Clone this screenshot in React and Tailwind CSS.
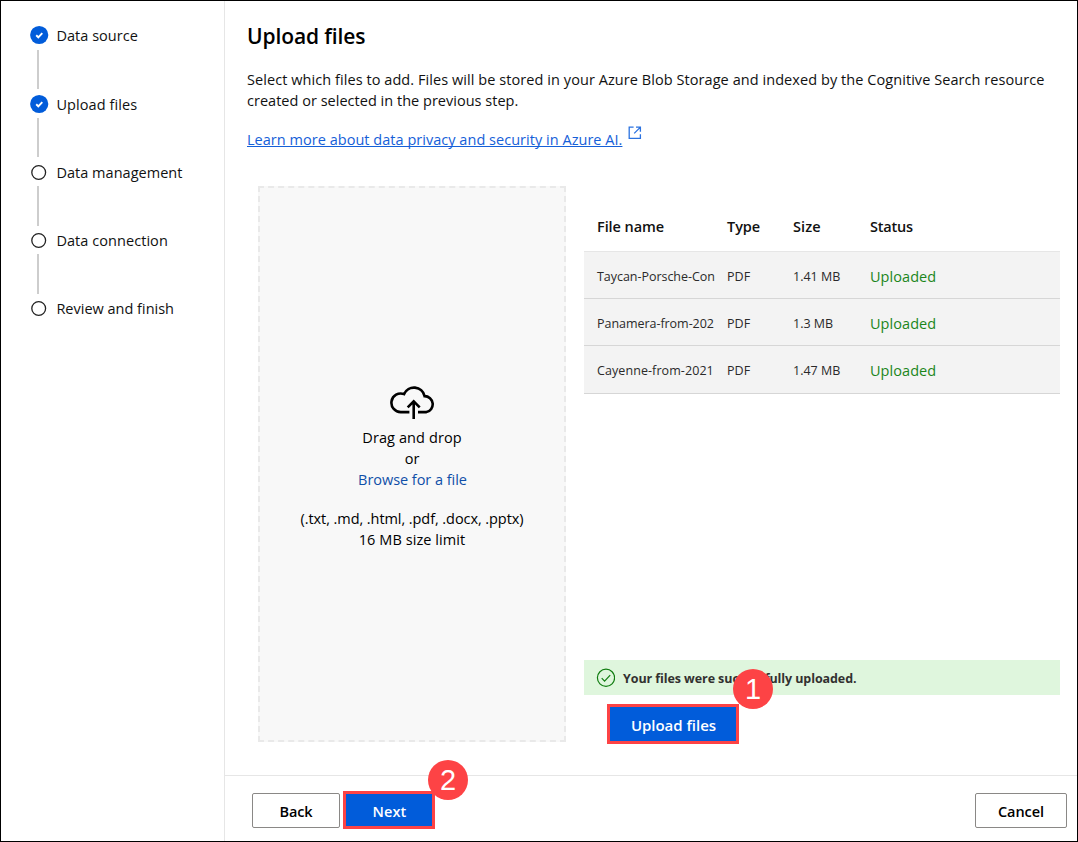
import React from "react";

const steps = [
  { label: "Data source", done: true, gap: "", line: "mt-[6px] h-[39px]", track: "tracking-[0.04px]" },
  { label: "Upload files", done: true, gap: "mt-[6px]", line: "mt-[5px] h-[39px]", track: "tracking-[0.08px]" },
  { label: "Data management", done: false, gap: "mt-[6px]", line: "mt-[5px] h-[40px]", track: "tracking-[0.03px]" },
  { label: "Data connection", done: false, gap: "mt-[5px]", line: "mt-[5px] h-[40px]", track: "tracking-[0.06px]" },
  { label: "Review and finish", done: false, gap: "mt-[5px]", line: null, track: "tracking-[0px]" },
];

const files = [
  { name: "Taycan-Porsche-Con", size: "1.41 MB", height: "h-[47px]", track: "tracking-[-0.04px]" },
  { name: "Panamera-from-202", size: "1.3 MB", height: "h-[47px]", track: "tracking-[-0.04px]" },
  { name: "Cayenne-from-2021", size: "1.47 MB", height: "h-[48px]", track: "tracking-[0.08px]" },
];

const columns = "grid grid-cols-[130px_66px_77px_1fr] items-center pl-[13px]";

function StepIcon({ done }) {
  return (
    <svg width="18" height="18" viewBox="0 0 18 18" fill="none" className="shrink-0 overflow-visible">
      {done ? (
        <>
          <circle cx="9.2" cy="9" r="9.1" fill="#015cda" />
          <path d="M6.2 9.3l2.1 2 4-4.2" stroke="#fff" strokeWidth="1.9" />
        </>
      ) : (
        <circle cx="8.7" cy="9.5" r="6.9" stroke="#222" strokeWidth="1.3" />
      )}
    </svg>
  );
}

function Sidebar() {
  return (
    <aside className="w-[224px] shrink-0 border-r border-[#e6e6e6] pl-[29px] pt-[25px]">
      <ol>
        {steps.map((s) => (
          <li key={s.label} className={s.gap}>
            <div className="flex h-[18px] items-center gap-[8.4px]">
              <StepIcon done={s.done} />
              <span className={`pt-[2px] text-[14.5px] leading-[18px] whitespace-nowrap ${s.track}`}>{s.label}</span>
            </div>
            {s.line && <div className={`ml-[7px] w-[2px] bg-[#cdcdcd] ${s.line}`} />}
          </li>
        ))}
      </ol>
    </aside>
  );
}

function DropZone() {
  return (
    <div className="flex h-[556px] w-[308px] shrink-0 flex-col items-center border-2 border-dashed border-[#e9e9e9] bg-[#f8f8f8] pt-[198px] text-center text-[14.5px] leading-[21px] text-black">
      <svg width="46" height="34" viewBox="0 0 46 34" fill="none" stroke="#000" strokeWidth="2.6">
        <path d="M20.4 26.1H12A9.3 9.3 0 1 1 15 8.1A10.9 10.9 0 0 1 35.6 10.1A8.1 8.1 0 0 1 37.4 26.1H29" />
        <path d="M24.7 33V15.6M18.7 21.4L24.7 15.4L30.7 21.4" />
      </svg>
      <p className="mt-[7px] tracking-[0.1px]">Drag and drop</p>
      <p>or</p>
      <p className="pl-px tracking-[-0.04px] text-[#0f4fa8]">Browse for a file</p>
      <p className="mt-[18px] tracking-[-0.07px]">(.txt, .md, .html, .pdf, .docx, .pptx)</p>
      <p className="tracking-[0.07px]">16 MB size limit</p>
    </div>
  );
}

function FileTable() {
  return (
    <div>
      <div className={`${columns} h-[51px] border-b border-[#e6e6e6] pt-px text-[14.5px] font-semibold`}>
        <span className="tracking-[-0.08px]">File name</span>
        <span className="tracking-[-0.05px]">Type</span>
        <span className="tracking-[0.1px]">Size</span>
        <span className="tracking-[-0.2px]">Status</span>
      </div>
      {files.map((f) => (
        <div key={f.name} className={`${columns} ${f.height} border-b border-[#d6d6d6] bg-[#f3f3f3] pt-[3px] text-[12.5px] leading-[18px] text-[#2a2a2a]`}>
          <span className={`whitespace-nowrap ${f.track}`}>{f.name}</span>
          <span className="tracking-[0.1px]">PDF</span>
          <span>{f.size}</span>
          <span className="text-[14.5px] tracking-[0.05px] text-[#1b861b]">Uploaded</span>
        </div>
      ))}
    </div>
  );
}

function Badge({ children, place }) {
  return (
    <span className={`absolute flex h-[40px] w-[40px] items-center justify-center rounded-full bg-[#fd4345] font-['Liberation_Sans',sans-serif] text-[29px] font-normal leading-none text-white ${place}`}>
      {children}
    </span>
  );
}

export default function App() {
  return (
    <div className="flex h-[842px] w-[1078px] overflow-hidden border border-black bg-white font-['Open_Sans','Noto_Sans',sans-serif] text-[#111]">
      <Sidebar />
      <div className="flex min-w-0 flex-1 flex-col">
        <main className="h-[774px] pl-[22px]">
          <h1 className="pt-[21px] text-[21px] font-semibold leading-[28px] tracking-[-0.1px] text-black">Upload files</h1>
          <p className="mt-[19px] text-[14.5px] leading-[21px] whitespace-nowrap">
            <span className="tracking-[0.066px]">
              Select which files to add. Files will be stored in your Azure Blob Storage and indexed by the Cognitive Search resource
            </span>
            <br />
            <span className="tracking-[0.02px]">created or selected in the previous step.</span>
          </p>
          <div className="mt-[14px] flex h-[27px] items-start text-[#1560d8]">
            <a className="pt-[4px] text-[14.5px] leading-[21px] tracking-[0.03px] whitespace-nowrap underline decoration-1 underline-offset-[1px] [text-decoration-skip-ink:none]">
              Learn more about data privacy and security in Azure AI.
            </a>
            <svg width="14" height="14" viewBox="0 0 14 14" fill="none" stroke="#2b72e0" strokeWidth="1.3" className="ml-[6px] mt-px">
              <path d="M5.6 1.2H1.2V12.4H12.4V8.2M8 1.2H12.4V5.8M12.2 1.4L6.2 7.4" />
            </svg>
          </div>
          <div className="ml-[11px] mt-[34px] flex gap-[18px]">
            <DropZone />
            <div className="flex h-[558px] w-[476px] flex-col justify-between pt-[15px]">
              <FileTable />
              <div>
                <div className="flex h-[35px] items-center gap-[8px] bg-[#dff6dd] pl-[12px] text-[#323130]">
                  <svg width="19" height="19" viewBox="0 0 19 19" fill="none" stroke="#107c10" strokeWidth="1.2">
                    <circle cx="10" cy="9.8" r="8.6" />
                    <path d="M5.7 10.2l2.9 2.9 5.6-5.9" />
                  </svg>
                  <span className="pt-[3px] text-[12.5px] font-bold tracking-[-0.08px]">Your files were successfully uploaded.</span>
                </div>
                <div className="relative ml-[23px] mt-[9px] w-[132px]">
                  <button className="h-[40px] w-[132px] border-[3px] border-[#fd4345] bg-[#015cda] pl-px pt-[2px] text-[15px] font-semibold tracking-[-0.03px] text-white">
                    Upload files
                  </button>
                  <Badge place="left-[126px] top-[-35px]">1</Badge>
                </div>
              </div>
            </div>
          </div>
        </main>
        <footer className="flex h-[66px] items-start border-t border-[#e6e6e6] pl-[27px] pr-[10px] pt-[15px] text-[14.5px] font-semibold text-black">
          <button className="mt-[2px] h-[35px] w-[88px] rounded-[2px] border border-[#8a8886] pt-[3px] tracking-[-0.15px]">Back</button>
          <div className="relative ml-[3px]">
            <button className="h-[38px] w-[92px] border-[3px] border-[#fd4345] bg-[#015cda] pl-px pt-[4px] tracking-[0.1px] text-white">Next</button>
            <Badge place="left-[85px] top-[-31px]">2</Badge>
          </div>
          <button className="ml-auto mt-[2px] h-[35px] w-[92px] rounded-[2px] border border-[#8a8886] pt-[3px] tracking-[-0.04px]">Cancel</button>
        </footer>
      </div>
    </div>
  );
}
